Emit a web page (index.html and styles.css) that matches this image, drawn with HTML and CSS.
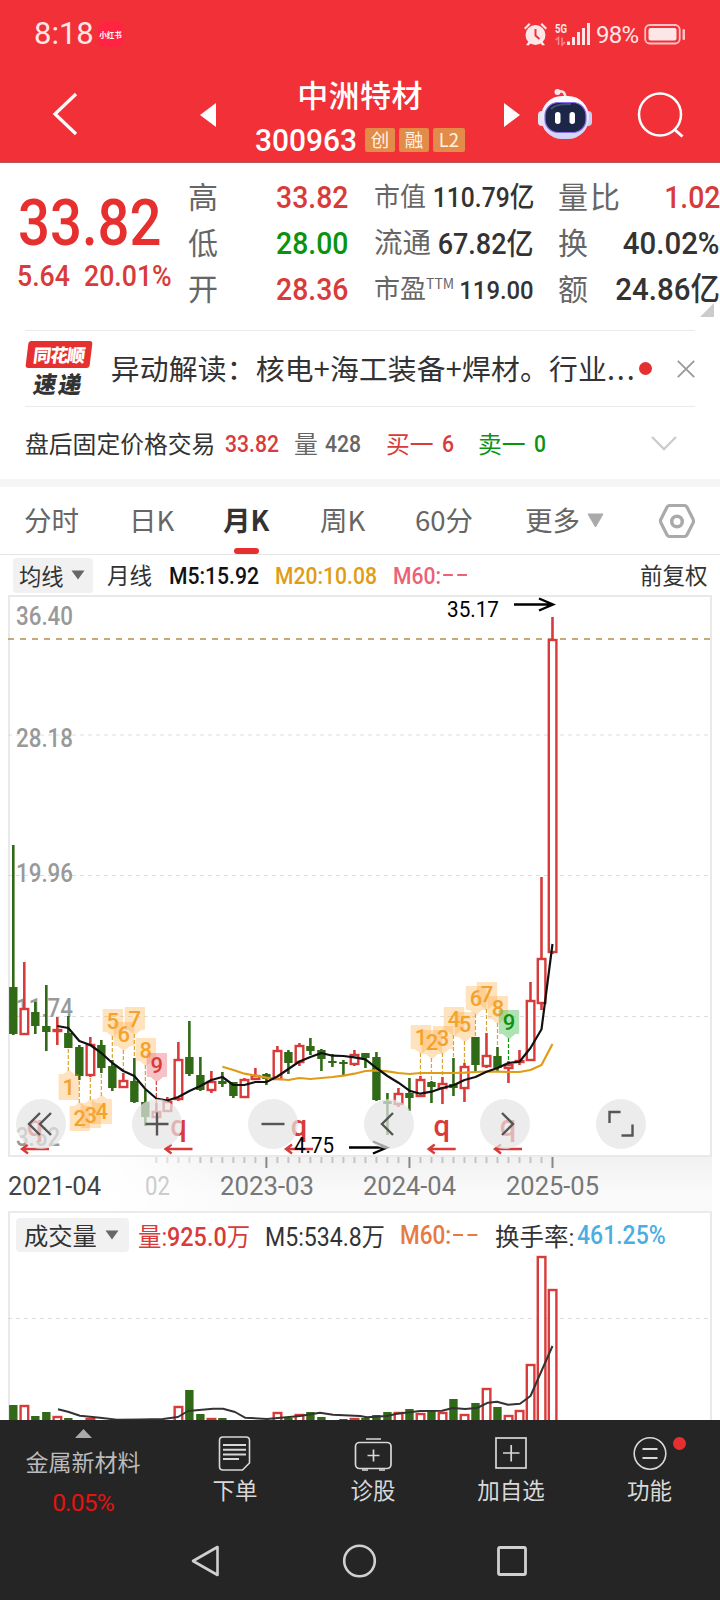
FILE: index.html
```html
<!DOCTYPE html>
<html lang="zh-CN">
<head>
<meta charset="utf-8">
<title>中洲特材 300963</title>
<link rel="stylesheet" href="styles.css">
</head>
<body>
<div class="phone">
  <header class="top">
    <div class="status">
      <span class="clock">8:18</span>
      <span class="app-badge">小红书</span>
      <svg class="status-icons" width="73" height="28" viewBox="520 20 73 28">
        <g fill="#fde6e7">
          <circle cx="535.5" cy="35" r="10"/>
          <path d="M524 28l5-5 1.5 1.5-5 5zM547 28l-5-5-1.500 1.500 5 5zM526 45l3-4 2 2-2.500 2.500zM545 45l-3-4-2 2 2.500 2.500z"/>
          <rect x="567" y="41.500" width="3" height="3.500"/><rect x="572" y="37" width="3" height="8"/><rect x="577" y="32" width="3" height="13"/><rect x="582" y="28" width="3" height="17"/><rect x="587" y="23" width="3" height="22"/>
        </g>
        <path d="M535.500 29v6.500l4 3.500" fill="none" stroke="#f23038" stroke-width="2"/>
        <text x="555" y="33" class="net" textLength="12" lengthAdjust="spacingAndGlyphs">5G</text>
        <path d="M555.500 40l3-2.500V45M562 37.500V45l3-3" fill="none" stroke="#f8898e" stroke-width="1.500"/>
      </svg>
      <span class="percent">98%</span>
      <svg class="battery" width="42" height="22" viewBox="644 23 42 22">
        <rect x="645.200" y="25" width="34.500" height="18.500" rx="4.500" fill="none" stroke="#fbc3c6" stroke-width="1.800"/>
        <rect x="648.500" y="28" width="28" height="12.500" rx="2" fill="#fde6e7"/>
        <rect x="682.500" y="29" width="2.500" height="11" rx="1" fill="#fbc3c6"/>
      </svg>
    </div>
    <div class="titlebar">
      <svg class="back" width="26" height="46" viewBox="52 91 26 46"><path d="M76 94L55 114l21 20" fill="none" stroke="#fff" stroke-width="3.200"/></svg>
      <svg class="prev" width="16" height="24" viewBox="0 0 16 24"><path d="M16 0v24L0 12z" fill="#fff"/></svg>
      <div class="stock">
        <div class="name">中洲特材</div>
        <div class="code-row"><span class="code">300963</span><span class="tag">创</span><span class="tag">融</span><span class="tag tag-wide">L2</span></div>
      </div>
      <svg class="next" width="16" height="24" viewBox="0 0 16 24"><path d="M0 0v24l16-12z" fill="#fff"/></svg>
      <svg class="robot" width="56" height="52" viewBox="537 88 56 52">
        <defs><linearGradient id="shell" x1="0" y1="0" x2="0" y2="1"><stop offset="0" stop-color="#fff"/><stop offset="1" stop-color="#cfd2f6"/></linearGradient></defs>
        <path d="M557 91.500c5-1 8 0 8.500 6" fill="none" stroke="#f6dfe8" stroke-width="2.500"/><circle cx="557.500" cy="92" r="3" fill="#f9eaf1"/>
        <rect x="538" y="111" width="8" height="15" rx="4" fill="#e4e4f5"/><rect x="584" y="111" width="8" height="15" rx="4" fill="#cfccf1"/>
        <rect x="541" y="96" width="48" height="43" rx="21" fill="url(#shell)"/>
        <rect x="545" y="102.500" width="41" height="30" rx="13" fill="#1e2647" stroke="#8b6df0" stroke-width="1.200"/>
        <path d="M551 109c5-5 13-5 20-5" stroke="#46506f" stroke-width="2" fill="none"/>
        <rect x="555" y="112" width="5.500" height="12" rx="2.700" fill="#fff"/><rect x="569.500" y="112" width="5.500" height="12" rx="2.700" fill="#fff"/>
      </svg>
      <svg class="search" width="48" height="48" viewBox="637 91 48 48"><circle cx="660" cy="114.500" r="21" fill="none" stroke="#fff" stroke-width="2.500"/><path d="M674 129l8.500 7.500" stroke="#fff" stroke-width="3"/></svg>
    </div>
  </header>

  <section class="quote">
    <div class="price-box">
      <div class="price">33.82</div>
      <div class="change"><span class="diff">5.64</span><span class="rate">20.01%</span></div>
    </div>
    <div class="col col-a">
      <div class="cell"><span>高</span><b class="red">33.82</b></div>
      <div class="cell"><span>低</span><b class="green">28.00</b></div>
      <div class="cell"><span>开</span><b class="red">28.36</b></div>
    </div>
    <div class="col col-b">
      <div class="cell cap"><span>市值</span><b>110.79亿</b></div>
      <div class="cell float"><span>流通</span><b>67.82亿</b></div>
      <div class="cell pe"><span>市盈<sup>TTM</sup></span><b>119.00</b></div>
    </div>
    <div class="col col-c">
      <div class="cell"><span>量比</span><b class="red">1.02</b></div>
      <div class="cell"><span>换</span><b>40.02%</b></div>
      <div class="cell"><span>额</span><b>24.86亿</b></div>
    </div>
    <i class="corner"></i>
  </section>

  <section class="news">
    <div class="logo"><span class="flag"><em>同花顺</em></span><span class="express">速递</span></div>
    <span class="headline">异动解读：核电+海工装备+焊材。行业<span class="dots">...</span></span>
    <i class="dot"></i>
    <svg class="close" width="18" height="18" viewBox="0 0 18 18"><path d="M.8.800l16.400 16.400M17.200.800L.8 17.200" stroke="#999" stroke-width="1.800"/></svg>
  </section>

  <section class="after">
    <span class="k">盘后固定价格交易</span><span class="num red">33.82</span><span class="k gray">量</span><span class="num gray">428</span><span class="k red">买一</span><span class="num red">6</span><span class="k green">卖一</span><span class="num green">0</span>
    <svg width="26" height="15" viewBox="0 0 26 15"><path d="M1 1l12 12L25 1" fill="none" stroke="#ccc" stroke-width="2.400"/></svg>
  </section>

  <nav class="tabs">
    <span>分时</span><span>日K</span><span class="active">月K</span><span>周K</span><span>60分</span><span>更多</span>
    <svg class="caret" width="17" height="15" viewBox="0 0 17 15"><path d="M1 1h15L8.500 14z" fill="#aaa" stroke="#aaa" stroke-linejoin="round"/></svg>
    <svg class="gear" width="38" height="36" viewBox="658 502.500 38 36"><path d="M669.500 505h15q1.500 0 2.300 1.300l6.200 12.200q1 2.500 0 4l-6.200 12.200q-.8 1.300-2.300 1.300h-15q-1.500 0-2.300-1.300l-6.200-12.200q-1-2 0-4l6.200-12.200q.8-1.300 2.300-1.300z" fill="none" stroke="#aaa" stroke-width="3.200"/><circle cx="677" cy="521" r="5.300" fill="none" stroke="#aaa" stroke-width="3.600"/></svg>
  </nav>

  <div class="averages">
    <span class="chip">均线<svg width="14" height="10" viewBox="0 0 14 10"><path d="M.5.500h13L7 9.500z" fill="#666"/></svg></span>
    <span class="k">月线</span><span class="num m5">M5:15.92</span><span class="num m20">M20:10.08</span><span class="num m60">M60:<i class="dash"></i><i class="dash"></i></span><span class="k adj">前复权</span>
  </div>

  <svg class="chart" id="chart" width="720" height="616" viewBox="0 595 720 616"></svg>

  <section class="volume">
    <div class="vol-head">
      <span class="chip">成交量<svg width="14" height="10" viewBox="0 0 14 10"><path d="M.5.500h13L7 9.500z" fill="#666"/></svg></span>
      <span class="v v1 red">量:<b>925.0</b>万</span><span class="v v2">M5:534.8万</span><span class="v v3">M60:<i class="dash"></i><i class="dash"></i></span><span class="v4">换手率:</span><span class="v v5">461.25%</span>
    </div>
    <svg id="volume" width="720" height="163" viewBox="0 1257 720 163"></svg>
  </section>

  <footer class="dock">
    <div class="dock-row">
      <div class="sector">
        <svg width="17" height="9" viewBox="0 0 17 9"><path d="M8.500 0L17 9H0z" fill="#aaa"/></svg>
        <span class="sector-name">金属新材料</span><span class="sector-rate">0.05%</span>
      </div>
      <div class="act act1"><svg width="36" height="38" viewBox="217 1434 36 38"><g fill="none" stroke="#d8d8d8" stroke-width="1.600"><path d="M223 1437h23q3.500 0 3.500 3.500v22.500l-7 7H223q-3.500 0-3.500-3.500v-26q0-3.500 3.500-3.500z"/><path d="M223 1445h23M223 1449.700h23M223 1454.500h23M223 1459h16" stroke-width="2"/></g></svg><span>下单</span></div>
      <div class="act act2"><svg width="40" height="38" viewBox="352 1434 40 38"><g fill="none" stroke="#d8d8d8" stroke-width="1.700"><rect x="354.500" y="1442.500" width="35.500" height="26" rx="4"/><path d="M365 1439h15M366.500 1455.500h12M372.500 1449.500v12M361 1470h6M378 1470h6"/></g></svg><span>诊股</span></div>
      <div class="act act3"><svg width="36" height="38" viewBox="493 1434 36 38"><g fill="none" stroke="#d8d8d8" stroke-width="1.700"><rect x="496" y="1438" width="30" height="30"/><path d="M503 1453h16.500M511.200 1445v16.500"/></g></svg><span>加自选</span></div>
      <div class="act act4"><svg width="36" height="38" viewBox="632.500 1434 36 38"><g fill="none" stroke="#d8d8d8" stroke-width="1.600"><circle cx="650.500" cy="1453.500" r="15.800"/><path d="M643 1449h15M643 1458h15" stroke-width="2"/></g></svg><span>功能</span><i class="alert"></i></div>
    </div>
    <div class="sysnav">
      <svg width="30" height="34" viewBox="190.500 1544 30 34"><path d="M193.500 1561L218 1547v28z" fill="none" stroke="#d0d0d0" stroke-width="2.600" stroke-linejoin="round"/></svg>
      <svg width="34" height="34" viewBox="341.500 1544 34 34"><circle cx="360" cy="1561" r="15.300" fill="none" stroke="#d0d0d0" stroke-width="2.600"/></svg>
      <svg width="32" height="34" viewBox="496 1544 32 34"><rect x="498.500" y="1547.500" width="27" height="27" rx="1.500" fill="none" stroke="#d0d0d0" stroke-width="2.800"/></svg>
    </div>
  </footer>
</div>
<script src="chart.js"></script>
</body>
</html>
```
FILE: styles.css
```css
* { box-sizing: border-box; }
body { margin: 0; background: #fff; font-family: Roboto, "Noto Sans CJK SC", sans-serif; color: #333; }
svg { display: block; flex: none; overflow: visible; }
i, em { font-style: normal; }
.phone { width: 720px; height: 1600px; overflow: hidden; background: #fff; }
.red { color: #d93a3a !important; }
.green { color: #0a930f !important; }
.gray { color: #666 !important; }

.top { height: 163px; background: #f23038; border-bottom: 1px solid #b9575d; }
.status { height: 68px; display: flex; align-items: center; padding-left: 34px; color: #fde6e7; }
.clock { font-size: 31px; line-height: 68px; width: 64px; }
.app-badge { width: 25px; height: 25px; border-radius: 6px; background: #ff2442; color: #fff; font: 700 7.500px/25px "Noto Sans CJK SC"; text-align: center; white-space: nowrap; margin-right: 397px; }
.net { font: 700 13px Roboto; fill: #fde6e7; }
.percent { font-size: 24px; width: 50px; padding: 1px 0 0 3px; margin-right: 1px; letter-spacing: -.8px; }
.titlebar { height: 94px; display: flex; align-items: flex-start; padding-left: 52px; }
.back { margin: 23px 122px 0 0; }
.prev { margin-top: 35px; }
.stock { width: 288px; text-align: center; color: #fff; }
.name { font: 500 31px/44px "Noto Sans CJK SC"; letter-spacing: .4px; height: 50px; padding-top: 4px; }
.code-row { display: flex; align-items: center; padding-left: 39px; height: 43px; }
.code { font-size: 32px; font-weight: 500; width: 110px; text-align: left; transform: scaleX(.935); transform-origin: left; }
.tag { width: 30px; height: 24px; border-radius: 2px; background: #e38b48; font: 18.500px/22px "Noto Sans CJK SC"; margin-right: 4px; color: #fff3e4; }
.tag-wide { width: 32px; margin: 0; }
.next { margin: 35px 17px 0 0; }
.robot { margin: 20px 44px 0 0; }
.search { margin-top: 23px; }

.quote { position: relative; height: 167px; display: grid; grid-template-columns: 170px 169px 187px 162px; padding-left: 18px; }
.price { font-size: 65px; font-weight: 500; line-height: 64px; color: #e63030; padding-top: 28px; height: 91px; white-space: nowrap; transform: scaleX(.865); transform-origin: left; }
.change { display: grid; grid-template-columns: 67px 1fr; font-size: 29px; font-weight: 500; line-height: 45px; color: #d93a3a; white-space: nowrap; }
.change span { transform: scaleX(.92); transform-origin: left; margin-left: -1px; }
.col { padding-top: 11px; white-space: nowrap; }
.cell { display: flex; justify-content: space-between; align-items: center; height: 46px; font-size: 30px; line-height: 46px; }
.cell span { color: #666; font-family: "Noto Sans CJK SC"; position: relative; top: -2px; }
.cell b { font-size: 31.500px; font-weight: 500; margin-left: -24px; transform: scaleX(.9); transform-origin: right; position: relative; top: 1px; }
.col-a { padding-right: 9px; }
.col-b { padding: 11px 0 0 17px; margin-right: 10px; }
.col-c { margin-left: 14px; margin-right: -14px; }
.col-c .cell span { letter-spacing: 2px; }
.col-c .cell b { transform: scaleX(.935); }
.col-c .cell b.red { transform: scaleX(.9); }
.cap, .pe { font-size: 26px; }
.cell.cap b { font-size: 28px; transform: scaleX(.88); }
.float { font-size: 28.500px; }
.float b { font-size: 30px; }
.pe b { font-size: 26.500px; }
.pe sup { font-size: 14px; line-height: 14px; vertical-align: 9px; }
.corner { position: absolute; right: 6px; bottom: 13px; border-left: 14px solid transparent; border-bottom: 14px solid #ccc; }

.news { height: 77px; margin: 0 25px; border-top: 1px solid #ebebeb; border-bottom: 1px solid #ebebeb; display: flex; align-items: center; }
.logo { width: 86px; height: 55px; padding-left: 2px; }
.flag { display: block; width: 64px; height: 27px; border-radius: 3px; transform: skewX(-7deg); background: #e63030; color: #fff; font: 900 18px/26px "Noto Sans CJK SC"; text-align: center; letter-spacing: -1px; }
.express { display: block; font: 900 23px/30px "Noto Sans CJK SC"; transform: skewX(-10deg); color: #333; padding-left: 7px; letter-spacing: 2px; }
.headline { font: 28.800px/40px "Noto Sans CJK SC"; color: #333; white-space: nowrap; width: 529px; letter-spacing: .2px; padding-bottom: 2px; }
.dots { letter-spacing: 1.800px; }
.dot { width: 13px; height: 13px; border-radius: 50%; background: #e63030; flex: none; margin: 0 25px 0 1px; }
.close { margin-left: 0; }

.after { height: 72px; display: grid; grid-template-columns: 200px 69px 31px 61px 56px 36px 56px 117px 26px; align-items: center; padding-left: 25px; font-size: 23.800px; white-space: nowrap; }
.after .k { font-family: "Noto Sans CJK SC"; }
.after .k, .averages .k { position: relative; top: -1px; }
.num { font-size: 24px; font-weight: 500; transform: scaleX(.88); transform-origin: left; position: relative; top: 1px; }

.tabs { height: 76px; border-top: 8px solid #f5f5f5; border-bottom: 1px solid #e5e5e5; display: grid; grid-template-columns: 105px 94px 97px 95px 110px 62px 71px 38px; padding-left: 24px; align-items: center; font: 27.500px/64px "Noto Sans CJK SC"; color: #666; white-space: nowrap; }
.tabs span { height: 67px; }
.active { font-weight: 700; color: #333; position: relative; }
.active::after { content: ""; position: absolute; left: 11px; bottom: 0; width: 25px; height: 6px; border-radius: 3px; background: #e63030; }

.averages { height: 40px; display: grid; grid-template-columns: 94px 62px 106px 118px 247px auto; align-items: center; padding-left: 13px; font-size: 22.500px; white-space: nowrap; }
.chip { display: flex; align-items: center; justify-content: space-between; width: 80px; height: 35px; padding: 0 8px 0 6px; background: #f1f1f1; border-radius: 4px; font: 22.300px/34px "Noto Sans CJK SC"; }
.averages .k { font-family: "Noto Sans CJK SC"; }
.m5 { color: #111; }
.m20 { color: #e09c14; }
.m60 { color: #eb6176; }
.dash { display: inline-block; width: 11px; height: 2px; background: currentColor; vertical-align: 8px; margin: 0 2.500px; }

.volume { height: 209px; }
.vol-head { height: 46px; display: grid; grid-template-columns: 122px 127px 135px 95px 82px auto; align-items: center; border-top: 2px solid #ebebeb; margin: 0 8px; padding-left: 8px; font-size: 25px; white-space: nowrap; }
.vol-head .chip { width: 113px; height: 34px; font-size: 24.300px; padding: 0 10px 0 8px; }
.vol-head b { font-weight: 500; }
.v { transform: scaleX(.935); transform-origin: left; }
.v2 { transform: scaleX(.925); }
.v3 { color: #e77a42; font-weight: 500; transform: scaleX(.9); }
.v4 { font-size: 24.500px; }
.v5 { color: #4baee3; font-weight: 500; transform: scaleX(.92); }

.axis { font: 25px Roboto; fill: #777; }
.ylab { font: 500 25.500px Roboto; fill: #999; }
.mark { font: 22px Roboto; fill: #000; }
.bdg { font: 500 22px Roboto; text-anchor: middle; }
.qq { font: 500 29px Roboto; fill: #d93a3a; text-anchor: middle; }
#volume { clip-path: inset(-46px 0 0 0); }

.dock { height: 180px; background: #252525; }
.dock-row { height: 104px; position: relative; display: grid; grid-template-columns: 166px 138px 138px 138px 139px; color: #d8d8d8; }
.sector { display: flex; flex-direction: column; align-items: center; padding-top: 9px; font: 23px/46px "Noto Sans CJK SC"; color: #bbb; }
.sector-name { height: 42px; line-height: 46px; }
.sector-rate { font: 24.500px/46px Roboto; color: #e4130e; letter-spacing: -.8px; }
.act { position: relative; display: flex; flex-direction: column; align-items: center; padding-top: 14px; font: 22.500px/34px "Noto Sans CJK SC"; }
.alert { position: absolute; left: 93px; top: 17px; width: 13px; height: 13px; border-radius: 50%; background: #e63030; }
.sysnav { display: flex; justify-content: space-between; padding: 20px 192px 0 190px; }
```
FILE: chart.js
```javascript
const R = '#d93a3a', G = '#306a16', X0 = 13.3, STEP = 11.004;
const x = i => X0 + i * STEP;

// kind, high, body top, body bottom, low
const candles = [
  ['g',845,987,1034,1035],['r',962,1008,1034,1034],['g',1002,1012,1026,1034],['g',985,1026,1032,1051],['r',1017,1029,1031,1045],
  ['g',1016,1033,1048,1048],['g',1045,1047,1076,1080],['r',1037,1044,1075,1077],['g',1040,1045,1068,1073],['g',1060,1066,1088,1091],
  ['r',1073,1080,1087,1087],['g',1058,1081,1102,1103],['g',1090,1102,1117,1126],['r',1103,1111,1117,1117],['r',1097,1101,1111,1111],
  ['r',1042,1059,1099,1101],['g',1021,1057,1074,1076],['g',1057,1075,1090,1091],['r',1071,1081,1090,1093],['g',1072,1081,1084,1087],
  ['g',1082,1082,1096,1098],['r',1078,1079,1097,1097],['r',1068,1075,1079,1079],['g',1073,1074,1079,1085],['r',1046,1050,1079,1080],
  ['g',1050,1052,1063,1074],['r',1043,1045,1062,1066],['g',1038,1046,1051,1055],['g',1049,1050,1059,1071],['g',1054,1061,1063,1067],
  ['g',1060,1062,1064,1075],['r',1050,1054,1064,1066],['g',1053,1053,1058,1068],['g',1052,1057,1100,1101],['g',1093,1101,1104,1135],
  ['r',1088,1093,1104,1107],['g',1078,1093,1098,1111],['r',1076,1079,1096,1097],['g',1081,1082,1087,1103],['r',1077,1083,1088,1104],
  ['g',1058,1084,1088,1096],['r',1063,1066,1088,1102],['g',1037,1037,1065,1072],['r',1033,1055,1066,1068],['g',1047,1056,1068,1071],
  ['r',1061,1064,1068,1083],['r',1050,1060,1062,1065],['r',982,1000,1060,1061],['r',877,958,1003,1010],['r',617,639,952,954]
];
const ma5 = [1026,1028,1041,1045,1053,1063,1071,1076,1089,1098.5,1100.5,1097,1091,1086,1080,1077,1085,1085,1082,1082,1076.5,1069,1061.5,1057,1053,1055.7,1056,1057.3,1059.3,1068,1076,1082.7,1090.7,1093.7,1091.7,1088,1085.3,1080,1077,1071.7,1068,1063,1061.7,1048,1029.3,944];
const ma20 = [1066.7,1070,1073.7,1075.7,1077.7,1079,1080,1078,1079,1078,1077,1075.7,1073.7,1071,1070.3,1071.3,1073,1074,1073,1073,1073,1073,1072.7,1072,1071.5,1071.7,1072,1072,1070,1065,1044];

const line = (pts, color, w) => `<polyline points="${pts.map(p => p.join()).join(' ')}" fill="none" stroke="${color}" stroke-width="${w}" stroke-linejoin="round"/>`;
const body = (i, kind, top, bottom) => kind === 'g'
  ? `<rect x="${x(i) - 4.2}" y="${top}" width="8.4" height="${Math.max(bottom - top, 2)}" fill="${G}"/>`
  : `<rect x="${x(i) - 3.7}" y="${top + 1}" width="7.6" height="${Math.max(bottom - top - 1, 1)}" fill="#fff" stroke="${R}" stroke-width="2.4"/>`;
const arrow = (x1, x2, y, color, w) => {
  const d = x2 > x1 ? -1 : 1, h = x2 > x1 ? 14 : 6, v = x2 > x1 ? 6 : 4.5;
  return `<path d="M${x1} ${y}H${x2}M${x2 + d * h} ${y - v}L${x2} ${y}l${d * h} ${v}" fill="none" stroke="${color}" stroke-width="${w}"/>`;
};
const fit = (cls, tx, ty, w, s, extra = '') => `<text class="${cls}" x="${tx}" y="${ty}" textLength="${w}" lengthAdjust="spacingAndGlyphs" ${extra}>${s}</text>`;

let s = `<defs><linearGradient id="ax" x1="0" y1="0" x2="0" y2="1"><stop offset="0" stop-color="#f1f1f1"/><stop offset=".7" stop-color="#fafafa"/></linearGradient>
<linearGradient id="fade" x1="0" x2="1"><stop offset="0" stop-color="#fff"/><stop offset=".45" stop-color="#fff" stop-opacity=".9"/><stop offset="1" stop-color="#fff" stop-opacity="0"/></linearGradient></defs>
<rect x="8" y="1157" width="704" height="54" fill="url(#ax)"/><rect x="8" y="1157" width="245" height="54" fill="url(#fade)"/>
<rect x="9" y="596" width="702" height="560" fill="none" stroke="#e9e9e9" stroke-width="2"/>`;
[735, 875.5, 1016.5].forEach(y => s += `<path d="M8 ${y}H710" stroke="#ddd" stroke-dasharray="4 4"/>`);
s += '<path d="M8 639H710" stroke="#c9a878" stroke-width="2" stroke-dasharray="6 6"/>';
[['36.40', 624.5], ['28.18', 747], ['19.96', 881.5], ['11.74', 1016.5]].forEach(([t, y]) => s += fit('ylab', 16, y, 57, t));
s += fit('ylab', 16, 1145.5, 44, '3.52');
candles.forEach(([k, h, t, b, l], i) => {
  s += `<path d="M${x(i)} ${h}V${l}" stroke="${k === 'g' ? G : R}" stroke-width="2.6"/>` + body(i, k, t, b);
});

// kind of pointer, label, candle index, top, bottom, colour
const badges = [
  ['up',1,5,1071,1099],['up',2,6,1103,1130],['up',3,7,1100,1127],['up',4,8,1096,1123],
  ['dn',5,9,1010,1036],['dn',6,10,1023,1050],['dn',7,11,1008,1034],['dn',8,12,1039,1065],['dn',9,13,1054,1081,'#d93a3a','#ee7a82'],
  ['dn',1,37,1026,1053],['dn',2,38,1031,1058],['dn',3,39,1027,1053],['dn',4,40,1008,1035],['dn',5,41,1013,1041],
  ['dn',6,42,987,1014],['dn',7,43,983,1009],['dn',8,44,997,1023],['dn',9,45,1011,1038,'#0a930f','#52bf5a']
];
badges.forEach(([dir, n, i, t, b, c = '#f3a22c', bg = '#ffa83c']) => {
  const cx = x(i) + .5, w = 9.2, up = dir === 'up';
  const shape = up
    ? `M${cx} ${t}l5 4h4.200v${b - t - 4}h-${2 * w}v-${b - t - 4}h4.200z`
    : `M${cx - w} ${t}h${2 * w}v${b - t - 5}h-3.200l-6 5-6-5h-3.200z`;
  s += `<path d="M${x(i)} ${up ? t : b}V${up ? candles[i][4] : candles[i][1]}" stroke="${n === 9 ? c : '#dca431'}" stroke-width="1.200" stroke-dasharray="4 2"/>`;
  s += `<g opacity="${n === 9 ? .45 : .33}"><path d="${shape}" fill="${bg}" stroke="${bg}" stroke-width="2" stroke-linejoin="round"/></g>`;
  s += `<text class="bdg" x="${cx}" y="${up ? b - 4 : t + 19}" fill="${c}">${n}</text>`;
});
s += line(ma20.map((y, i) => [x(i + 19), y]), '#e09c14', 2.2) + line(ma5.map((y, i) => [x(i + 4), y]), '#111', 2.2);

[35, 178.5, 299, 441.7, 508].forEach(cx => s += `<text class="qq" x="${cx}" y="1136">q</text>` + arrow(cx + 14, cx - 13, 1149, R, 2.4));
s += fit('mark', 294, 1153, 40, '4.75') + arrow(349, 387, 1147.5, '#000', 2.4);
s += fit('mark', 447, 617, 52, '35.17') + arrow(514, 553, 604.5, '#000', 2.4);

const icons = [
  [41, 'M40 1113l-11 11 11 11M51 1113l-11 11 11 11'], [157, 'M145.500 1124h23M157 1112.500v23'], [273, 'M261.500 1124h23'],
  [389, 'M393 1113l-11 11 11 11'], [505, 'M502 1113l11 11-11 11'], [621, 'M609.500 1123v-11h11M621.500 1135.500h11v-11']
];
icons.forEach(([cx, d]) => s += `<circle cx="${cx}" cy="1124" r="25" fill="#e5e5e5" fill-opacity=".72"/><path d="${d}" fill="none" stroke="#555" stroke-width="2.400"/>`);

for (let i = 13; i < 50; i++) {
  const major = i === 23 || i === 36 || i === 49;
  s += `<path d="M${x(i)} 1157V${major ? 1168 : 1163}" stroke="${major ? '#888' : i < 17 ? '#ddd' : '#c4c4c4'}" stroke-width="2"/>`;
}
s += fit('axis', 8, 1194.5, 93, '2021-04', 'style="fill:#444"') + fit('axis', 145, 1194.5, 25, '02', 'style="fill:#ccc"')
  + fit('axis', 220, 1194.5, 94, '2023-03') + fit('axis', 363, 1194.5, 93, '2024-04') + fit('axis', 506, 1194.5, 93, '2025-05');
document.getElementById('chart').innerHTML = s;

const bars = [
  [0,'g',1405],[1,'r',1405],[2,'g',1416],[3,'g',1412],[4,'r',1416],[5,'g',1418],[7,'r',1418],[15,'r',1406],[16,'g',1390],[17,'g',1414],[18,'r',1418],[19,'g',1418],
  [24,'r',1412],[25,'g',1418],[26,'r',1414],[27,'g',1412],[28,'g',1417],[30,'g',1419],[31,'r',1418],[32,'g',1418],[33,'g',1415],[34,'g',1412],[35,'r',1412],[36,'g',1409],
  [37,'r',1413],[38,'g',1411],[39,'r',1412],[40,'g',1399],[41,'r',1414],[42,'g',1403],[43,'r',1388],[44,'g',1407],[45,'r',1415],[46,'r',1410],[47,'r',1364],[48,'r',1256],[49,'r',1289]
];
const volMa = [[58,1409.3],[68,1411.700],[80,1415.700],[100,1417.700],[117,1419.700],[140,1419.500],[163,1419],[178,1417],[188,1411],[202,1409.700],[213,1408.700],[223,1408.700],[235,1412],[245,1417.700],[267,1419],[300,1416],[320,1412.700],[333,1414.700],[360,1416],[367,1417.300],[387,1416],[397,1413.700],[420,1411],[442,1410.700],[453,1408],[465,1409],[477,1408],[488,1402.700],[497,1401.700],[508,1404.700],[520,1403.700],[530.500,1396],[541.500,1371],[552.500,1346]];
let v = '<path d="M9 1213V1420M711 1213V1420" stroke="#e9e9e9" stroke-width="2"/><path d="M8 1318.500H710" stroke="#ddd" stroke-dasharray="4 4"/>';
bars.forEach(([i, k, t]) => v += body(i, k, t, 1424));
document.getElementById('volume').innerHTML = v + line(volMa, '#333', 2);
```
